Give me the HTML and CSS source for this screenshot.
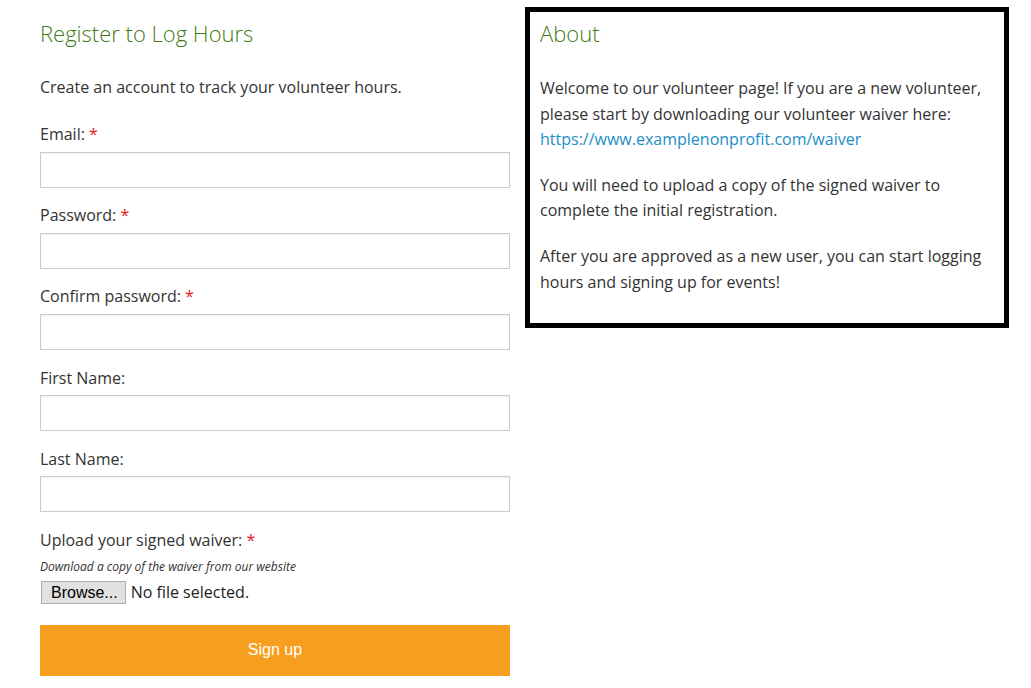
FILE: index.html
```html
<!DOCTYPE html>
<html lang="en">
<head>
<meta charset="utf-8">
<title>Register to Log Hours</title>
<link rel="stylesheet" href="styles.css">
</head>
<body>
<div class="page">
  <main class="register">
    <h2 class="heading">Register to Log Hours</h2>
    <p class="intro">Create an account to track your volunteer hours.</p>
    <form class="form">
      <div class="field">
        <label class="label">Email: <span class="req">*</span></label>
        <input class="input" type="text">
      </div>
      <div class="field">
        <label class="label">Password: <span class="req">*</span></label>
        <input class="input" type="password">
      </div>
      <div class="field">
        <label class="label">Confirm password: <span class="req">*</span></label>
        <input class="input" type="password">
      </div>
      <div class="field">
        <label class="label">First Name:</label>
        <input class="input" type="text">
      </div>
      <div class="field">
        <label class="label">Last Name:</label>
        <input class="input" type="text">
      </div>
      <div class="upload">
        <label class="label">Upload your signed waiver: <span class="req">*</span></label>
        <div class="hint">Download a copy of the waiver from our website</div>
        <div class="file">
          <span class="browse">Browse...</span>
          <span class="file-status">No file selected.</span>
        </div>
      </div>
      <button class="submit" type="button">Sign up</button>
    </form>
  </main>
  <aside class="about">
    <h2 class="heading">About</h2>
    <p class="text">Welcome to our volunteer page! If you are a new volunteer, please start by downloading our volunteer waiver here: <a class="link" href="#">https://www.examplenonprofit.com/waiver</a></p>
    <p class="text">You will need to upload a copy of the signed waiver to complete the initial registration.</p>
    <p class="text">After you are approved as a new user, you can start logging hours and signing up for events!</p>
  </aside>
</div>
</body>
</html>
```

FILE: styles.css
```css
html, body {
  margin: 0;
  padding: 0;
  background: #fff;
}
body {
  font-family: "Open Sans", "Liberation Sans", sans-serif;
  font-size: 16px;
  line-height: 25.6px;
  color: #333;
}
.page {
  display: flex;
  align-items: flex-start;
  padding: 7px 0 0 40px;
  gap: 15px;
}
.register {
  width: 470px;
  padding-top: 12px;
}
.heading {
  margin: 0 0 29px;
  font-size: 22px;
  line-height: 28px;
  font-weight: 300;
  color: #3f7a16;
}
.register .heading {
  margin-bottom: 28px;
}
.intro {
  margin: 0 0 21.5px;
}
.form {
  display: flex;
  flex-direction: column;
}
.field {
  display: flex;
  flex-direction: column;
  margin-bottom: 15.6px;
}
.label {
  display: block;
  margin-bottom: 4px;
}
.req {
  color: #e8141c;
}
.input {
  box-sizing: border-box;
  width: 470px;
  height: 36px;
  margin: 0;
  border: 1px solid #cccccc;
  box-shadow: inset 0 1px 2px rgba(0,0,0,0.06);
  background: #fff;
  font: inherit;
  padding: 4px 8px;
}
.upload {
  display: flex;
  flex-direction: column;
}
.upload .label {
  margin-bottom: 0;
}
.hint {
  font-size: 12px;
  font-style: italic;
  line-height: 18px;
  margin: 4px 0 5px;
}
.file {
  display: flex;
  align-items: center;
  gap: 5px;
  height: 24px;
}
.browse {
  box-sizing: border-box;
  height: 23px;
  padding: 0 7px 0 9px;
  margin-left: 1px;
  border: 1px solid #adadad;
  background: #e1e1e1;
  font-family: "Liberation Sans", Arial, sans-serif;
  font-size: 16px;
  line-height: 21px;
  color: #000;
}
.file-status {
  color: #222;
}
.submit {
  margin-top: 20px;
  width: 470px;
  height: 51px;
  border: 0;
  background: #f89e1f;
  color: #fff;
  font-family: "Liberation Sans", Arial, sans-serif;
  font-size: 16px;
  cursor: pointer;
}
.about {
  box-sizing: border-box;
  width: 484px;
  border: 5px solid #000;
  padding: 7px 10px 28px;
}
.text {
  margin: 0 0 20px;
}
.text:last-child {
  margin-bottom: 0;
}
.link {
  color: #1b8ec6;
  text-decoration: none;
}
```
